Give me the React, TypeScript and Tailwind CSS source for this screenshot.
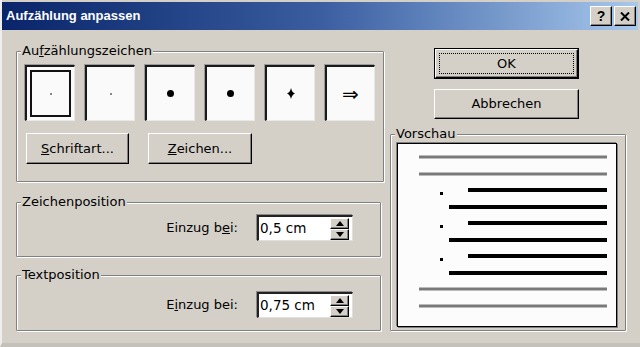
import React from 'react'

const raised =
  'border border-t-white border-l-white border-r-black border-b-black shadow-[inset_-1px_-1px_0_#808080] bg-[#d4d0c8]'
const groupBox =
  'border border-[#808080] shadow-[1px_1px_0_#fff,inset_1px_1px_0_#fff] rounded-[1px]'

function Group({ title, className, children }: { title: React.ReactNode; className?: string; children: React.ReactNode }) {
  return (
    <fieldset className={`${groupBox} ${className ?? ''}`}>
      <legend className="ml-[4px] px-[1px] leading-[16px] bg-[#d4d0c8]">{title}</legend>
      {children}
    </fieldset>
  )
}

function BulletBox({ selected, children }: { selected?: boolean; children: React.ReactNode }) {
  return (
    <div className="w-[50px] h-[56px] flex border-t-2 border-l-2 border-t-[#1a1a1a] border-l-[#1a1a1a] border-r border-b border-r-[#e8e8e8] border-b-[#e8e8e8] bg-[#fafafa] shadow-[-1px_-1px_0_#9a9a9a]">
      <div className={`flex-1 flex items-center justify-center ${selected ? 'm-[3px] border-2 border-[#111]' : ''}`}>
        {children}
      </div>
    </div>
  )
}

function Spinner({ value }: { value: string }) {
  return (
    <div className="w-[96px] h-[26px] flex items-center border-t-2 border-l-2 border-t-[#222] border-l-[#222] border-r border-b border-r-[#e0e0e0] border-b-[#e0e0e0] bg-white shadow-[-1px_-1px_0_#8a8a8a]">
      <span className="flex-1 pl-[1px] text-[13.5px]">{value}</span>
      <div className="w-[19px] h-[22px] mr-[3px] flex flex-col">
        <div className={`flex-1 flex items-center justify-center ${raised}`}>
          <svg width="8" height="5" viewBox="0 0 8 5"><path d="M4 0 L8 5 L0 5 Z" fill="#000" /></svg>
        </div>
        <div className={`flex-1 flex items-center justify-center ${raised}`}>
          <svg width="8" height="5" viewBox="0 0 8 5"><path d="M0 0 L8 0 L4 5 Z" fill="#000" /></svg>
        </div>
      </div>
    </div>
  )
}

function Preview() {
  const gray = [13, 30, 145, 162]
  const black = [46, 63, 79, 96, 112, 129]
  return (
    <svg width="218" height="182" viewBox="0 0 218 182">
      {gray.map((y) => (
        <line key={y} x1="21" x2="209" y1={y} y2={y} stroke="#7a7a7a" strokeWidth="3" />
      ))}
      {black.map((y, i) => (
        <line key={y} x1={i % 2 === 0 ? 70 : 51} x2="209" y1={y} y2={y} stroke="#000" strokeWidth="4" />
      ))}
      {[49, 82, 115].map((y) => (
        <rect key={y} x="42" y={y - 1} width="3" height="3" fill="#000" />
      ))}
    </svg>
  )
}

export default function App() {
  return (
    <div className="w-[640px] h-[347px] overflow-hidden bg-[#d4d0c8] text-black text-[13px] font-['DejaVu_Sans',sans-serif] border-l-2 border-l-[#eeeeee] border-b-4 border-b-[#c4c1ba]">
      <div className="pt-[2px] pr-[2px]">
        <div className="h-[28px] flex items-center pl-[4px] pr-[2px] bg-gradient-to-r from-[#0a246a] via-[#3a5ea0] to-[#a8c8ec]">
          <span className="flex-1 text-white font-bold text-[13px] font-['Liberation_Sans',sans-serif]">Aufzählung anpassen</span>
          <div className="flex gap-[2px]">
            <div className={`w-[22px] h-[20px] flex items-center justify-center font-bold text-[14px] font-['Liberation_Sans',sans-serif] ${raised}`}>?</div>
            <div className={`w-[22px] h-[20px] flex items-center justify-center ${raised}`}>
              <svg width="10" height="9" viewBox="0 0 10 9"><path d="M1 0.5 L9 8.5 M9 0.5 L1 8.5" stroke="#000" strokeWidth="2" /></svg>
            </div>
          </div>
        </div>
      </div>

      <div className="flex pl-[14px] pt-[13px]">
        <div className="w-[365px] flex flex-col">
          <Group title={<>Au<u>f</u>zählungszeichen</>} className="pt-[6px] pb-[17px]">
            <div className="px-[8px]">
              <div className="flex gap-[10px]">
                <BulletBox selected><div className="w-[2px] h-[2px] bg-[#888]" /></BulletBox>
                <BulletBox><div className="w-[2px] h-[2px] bg-[#888]" /></BulletBox>
                <BulletBox><div className="w-[7px] h-[7px] rounded-full bg-black" /></BulletBox>
                <BulletBox><div className="w-[7px] h-[7px] rounded-full bg-black" /></BulletBox>
                <BulletBox>
                  <svg width="8" height="11" viewBox="0 0 8 11"><path d="M4 0 Q5 4.5 8 5.5 Q5 6.5 4 11 Q3 6.5 0 5.5 Q3 4.5 4 0 Z" fill="#000" /></svg>
                </BulletBox>
                <BulletBox><span className="text-[20px] leading-none">⇒</span></BulletBox>
              </div>
              <div className="flex gap-[19px] mt-[12px] pl-[1px]">
                <button className={`w-[103px] h-[31px] ${raised}`}><u>S</u>chriftart...</button>
                <button className={`w-[104px] h-[31px] ${raised}`}><u>Z</u>eichen...</button>
              </div>
            </div>
          </Group>

          <Group title="Zeichenposition" className="mt-[12px] pt-[5px] pb-[15px] pr-[27px]">
            <div className="flex items-center justify-end gap-[19px]">
              <span>Einzug b<u>e</u>i:</span>
              <Spinner value="0,5 cm" />
            </div>
          </Group>

          <Group title="Textposition" className="mt-[10px] pt-[9px] pb-[12px] pr-[27px]">
            <div className="flex items-center justify-end gap-[19px]">
              <span>E<u>i</u>nzug bei:</span>
              <Spinner value="0,75 cm" />
            </div>
          </Group>
        </div>

        <div className="ml-[9px] w-[236px] flex flex-col">
          <div className="ml-[44px] mt-[5px] flex flex-col gap-[10px]">
            <button className="w-[145px] h-[31px] border border-black p-0 bg-[#d4d0c8]">
              <div className={`w-full h-full flex items-center justify-center ${raised}`}>
                <div className="w-[135px] h-[21px] flex items-center justify-center border border-dotted border-black">OK</div>
              </div>
            </button>
            <button className={`w-[145px] h-[30px] ${raised}`}>Abbrechen</button>
          </div>
          <Group title="Vorschau" className="mt-[7px] pt-[1px] pb-[3px]">
            <div className="pl-[6px] pr-[8px]">
              <div className="border border-black bg-[#fcfcfc] shadow-[-1px_-1px_0_#808080,1px_1px_0_#808080]">
                <Preview />
              </div>
            </div>
          </Group>
        </div>
      </div>
    </div>
  )
}
